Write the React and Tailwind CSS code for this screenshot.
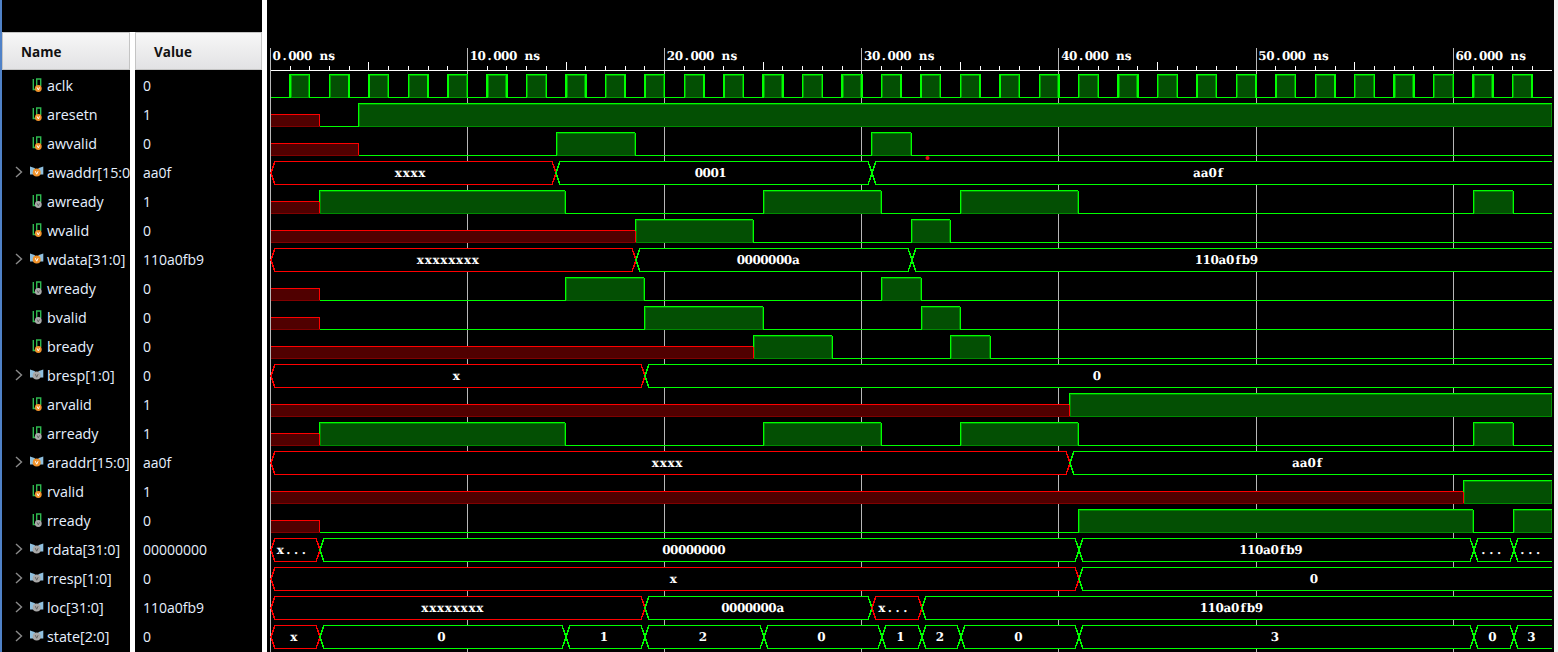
const SIGNALS = [
  { name: 'aclk', value: '0', on: true },
  { name: 'aresetn', value: '1', on: true },
  { name: 'awvalid', value: '0', on: true },
  { name: 'awaddr[15:0]', value: 'aa0f', on: true, bus: true },
  { name: 'awready', value: '1' },
  { name: 'wvalid', value: '0', on: true },
  { name: 'wdata[31:0]', value: '110a0fb9', on: true, bus: true },
  { name: 'wready', value: '0' },
  { name: 'bvalid', value: '0' },
  { name: 'bready', value: '0', on: true },
  { name: 'bresp[1:0]', value: '0', bus: true },
  { name: 'arvalid', value: '1', on: true },
  { name: 'arready', value: '1' },
  { name: 'araddr[15:0]', value: 'aa0f', on: true, bus: true },
  { name: 'rvalid', value: '1', on: true },
  { name: 'rready', value: '0' },
  { name: 'rdata[31:0]', value: '00000000', bus: true },
  { name: 'rresp[1:0]', value: '0', bus: true },
  { name: 'loc[31:0]', value: '110a0fb9', bus: true },
  { name: 'state[2:0]', value: '0', bus: true },
];

const END = 1552;
const T0 = 270.3;
const NS = 19.717;
const GREEN = '#00ff00';

// each segment: [right edge in px, level up to that edge]
const READY = [[319.6, 'x'], [565.4, 1], [763.6, 0], [881.4, 1], [960.4, 0], [1078.4, 1], [1473.4, 0], [1513.4, 1], [END, 0]];
const BITS = {
  1: [[319.6, 'x'], [358.6, 0], [END, 1]],
  2: [[358.6, 'x'], [556.6, 0], [635.4, 1], [871.6, 0], [911.4, 1], [END, 0]],
  4: READY,
  5: [[635.6, 'x'], [753.4, 1], [911.6, 0], [950.4, 1], [END, 0]],
  7: [[319.6, 'x'], [565.6, 0], [644.4, 1], [881.6, 0], [921.4, 1], [END, 0]],
  8: [[319.6, 'x'], [644.6, 0], [763.4, 1], [921.6, 0], [960.4, 1], [END, 0]],
  9: [[753.6, 'x'], [832.4, 1], [950.6, 0], [990.4, 1], [END, 0]],
  11: [[1069.6, 'x'], [END, 1]],
  12: READY,
  14: [[1463.6, 'x'], [END, 1]],
  15: [[319.6, 'x'], [1078.6, 0], [1473.4, 1], [1513.6, 0], [END, 1]],
};

// each segment: [right edge in px, label, red]
const BUSES = {
  3: [[556, 'xxxx', 1], [872, '0001'], [END, 'aa0f']],
  6: [[636, 'xxxxxxxx', 1], [912, '0000000a'], [END, '110a0fb9']],
  10: [[645, 'x', 1], [END, '0']],
  13: [[1070, 'xxxx', 1], [END, 'aa0f']],
  16: [[320, 'x...', 1], [1079, '00000000'], [1474, '110a0fb9'], [1514, '...'], [END, '...']],
  17: [[1079, 'x', 1], [END, '0']],
  18: [[645, 'xxxxxxxx', 1], [872, '0000000a'], [922, 'x...', 1], [END, '110a0fb9']],
  19: [[320, 'x', 1], [566, '0'], [645, '1'], [764, '2'], [882, '0'], [922, '1'], [961, '2'], [1079, '0'], [1474, '3'], [1514, '0'], [END, '3']],
};

const lowY = row => 97.5 + 29 * row;

// the wave labels are a serif face set on a fixed 8px pitch, each glyph centred in its cell
function WaveText({ x, y, children }) {
  const xs = [...children].map((_, i) => x + 4.4 + i * 7.85).join(' ');
  return (
    <text x={xs} y={y} textAnchor="middle" fill="#fff" fontSize="12" fontWeight="700" textRendering="geometricPrecision" style={{ fontFamily: '"DejaVu Serif", serif' }}>
      {children}
    </text>
  );
}

function SignalIcon({ bus, on }) {
  const disc = on ? '#f0922b' : '#a9a9a9';
  if (bus) {
    return (
      <svg width="16" height="16" viewBox="0 0 16 16" className="shrink-0">
        <path d="M2 1.5 L6.5 3 L8.7 5.5 L10.9 3 L15.3 1.5 V9.5 H2 Z" fill="#8fc0df" />
        <circle cx="8.7" cy="7.6" r="4" fill={disc} />
        <path d="M7.3 6.2 L8.7 9.2 L10.1 6.2" fill="none" stroke={on ? '#fff' : '#666'} strokeWidth="1" />
      </svg>
    );
  }
  return (
    <svg width="16" height="16" viewBox="0 0 16 16" className="shrink-0">
      <g fill="none" stroke="#2fb84f" strokeWidth="1.4">
        <path d="M5.3 1 V11.5 H8" />
        <path d="M8.7 8 V1 H12.7 V8" />
      </g>
      <circle cx="10.3" cy="10.5" r="3.4" fill={disc} />
      <path d="M9.1 9.4 L10.3 11.9 L11.5 9.4" fill="none" stroke={on ? '#fff' : '#666'} strokeWidth="1" />
    </svg>
  );
}

function Chevron() {
  return (
    <svg width="8" height="12" viewBox="0 0 8 12" className="absolute left-[15px] top-[8px]">
      <path d="M1 1 L6.5 6 L1 11" fill="none" stroke="#8a8a8a" strokeWidth="1.4" />
    </svg>
  );
}

function BitWave({ row, segs }) {
  const low = lowY(row);
  const high = low - 23;
  const mid = low - 12;
  let x0 = 271;
  let prev = null;
  const parts = segs.map(([x1, level], i) => {
    const from = x0;
    const before = prev;
    x0 = x1;
    prev = level;
    if (level === 'x') {
      return (
        <g key={i}>
          <rect x={from} y={mid} width={x1 - from} height={low - mid} fill="#500000" />
          <path d={`M${from} ${mid} H${x1} V${low}`} fill="none" stroke="#ff0000" strokeWidth="1.5" />
          <path d={`M${from} ${low - 0.5} H${x1}`} stroke="#800000" />
        </g>
      );
    }
    if (level === 1) {
      const rise = before === 'x' ? mid : low;
      return (
        <g key={i}>
          <rect x={from + 1} y={high + 1} width={x1 - from - 2} height={low - high - 1.5} fill="#034f03" stroke="#008a00" />
          <path d={`M${from} ${rise} V${high} H${x1}`} fill="none" stroke={GREEN} strokeWidth="1.5" />
          {x1 < END && <path d={`M${x1} ${high} V${low}`} stroke={GREEN} strokeWidth="1.5" />}
        </g>
      );
    }
    return <path key={i} d={`M${from} ${low} H${x1}`} stroke={GREEN} strokeWidth="1.5" />;
  });
  return <g>{parts}</g>;
}

function ClockWave() {
  const low = lowY(0);
  const high = low - 23;
  const pulses = [];
  for (let t = 1; t < 64; t += 2) pulses.push(t);
  return (
    <g>
      <path d={`M271 ${low} H${END}`} stroke={GREEN} strokeWidth="1.5" />
      {pulses.map(t => {
        const a = T0 + NS * t;
        return (
          <g key={t}>
            <rect x={a + 1} y={high + 1} width={NS - 2} height={low - high - 1.5} fill="#034f03" stroke="#00a000" />
            <path d={`M${a} ${low} V${high} H${a + NS} V${low}`} fill="none" stroke={GREEN} strokeWidth="1.5" />
          </g>
        );
      })}
    </g>
  );
}

function BusWave({ row, segs }) {
  const low = lowY(row);
  const high = low - 23;
  const mid = low - 11.5;
  let x0 = 271;
  return (
    <g>
      {segs.map(([x1, label, red], i) => {
        const left = x0;
        x0 = x1;
        const color = red ? '#ff0000' : GREEN;
        const rEnd = x1 === END ? END : x1 - 4;
        const d = `M${rEnd} ${high} H${left + 4} L${left} ${mid} L${left + 4} ${low} H${rEnd}` +
          (x1 === END ? '' : ` L${x1} ${mid} L${rEnd} ${high}`);
        const start = (left + x1) / 2 - 1.5 - 4.5 * label.length;
        return (
          <g key={i}>
            <path d={d} fill="#000" stroke={color} strokeWidth="1.5" />
            <WaveText x={start} y={low - 8}>{label}</WaveText>
          </g>
        );
      })}
    </g>
  );
}

function Waves() {
  const minor = [];
  for (let t = 1; t < 65; t++) if (t % 10) minor.push(t);
  const grid = [0, 10, 20, 30, 40, 50, 60];
  return (
    <svg width="1287" height="652" viewBox="267 0 1287 652" className="block" shapeRendering="crispEdges">
      {grid.map(t => (
        <g key={t}>
          <path d={`M${T0 + NS * t} 48 V652`} stroke="#b8b8b8" strokeWidth="1" />
          <WaveText x={T0 + NS * t + 2} y={60}>{`${t}.000 ns`}</WaveText>
        </g>
      ))}
      {minor.map(t => (
        <path key={t} d={`M${T0 + NS * t} ${t % 5 ? 66 : 62} V70`} stroke="#fff" strokeWidth="1" />
      ))}
      <path d={`M271 70.5 H${END}`} stroke="#fff" strokeWidth="1" />
      <ClockWave />
      {Object.entries(BITS).map(([row, segs]) => <BitWave key={row} row={Number(row)} segs={segs} />)}
      {Object.entries(BUSES).map(([row, segs]) => <BusWave key={row} row={Number(row)} segs={segs} />)}
      <circle cx="927.5" cy="158" r="2" fill="#e01010" shapeRendering="auto" />
    </svg>
  );
}

function HeaderCell({ label, pad }) {
  return (
    <div className={`h-[38px] flex items-center ${pad} pt-[2px] text-[13.5px] font-bold text-[#111] bg-gradient-to-b from-[#f7f7f7] to-[#e2e2e4] border border-[#c4c4c4]`}>
      {label}
    </div>
  );
}

export default function App() {
  return (
    <div className="w-[1558px] h-[652px] flex bg-black overflow-hidden" style={{ fontFamily: '"Open Sans", sans-serif' }}>
      <div className="w-[2px] bg-[#4f81c7]" />

      {/* Name column */}
      <div className="w-[128px] pt-[32px] overflow-hidden">
        <HeaderCell label="Name" pad="pl-[18px]" />
        <div className="pt-[1px]">
          {SIGNALS.map(s => (
            <div key={s.name} className="relative h-[29px] flex items-center pl-[28px] -ml-[2px] whitespace-nowrap text-[14.3px] text-[#e6f0ff]">
              {s.bus && <Chevron />}
              <SignalIcon bus={s.bus} on={s.on} />
              <span className="ml-[3px]">{s.name}</span>
            </div>
          ))}
        </div>
      </div>
      <div className="w-[5px] mt-[32px] bg-white" />

      {/* Value column */}
      <div className="w-[127px] pt-[32px]">
        <HeaderCell label="Value" pad="pl-[18px]" />
        <div className="pt-[1px]">
          {SIGNALS.map(s => (
            <div key={s.name} className="h-[29px] flex items-center pl-[8px] text-[14px] text-[#e6f0ff]">
              {s.value}
            </div>
          ))}
        </div>
      </div>
      <div className="w-[5px] bg-white" />

      <Waves />
      <div className="flex-1 bg-[#f0f0f0]" />
    </div>
  );
}
